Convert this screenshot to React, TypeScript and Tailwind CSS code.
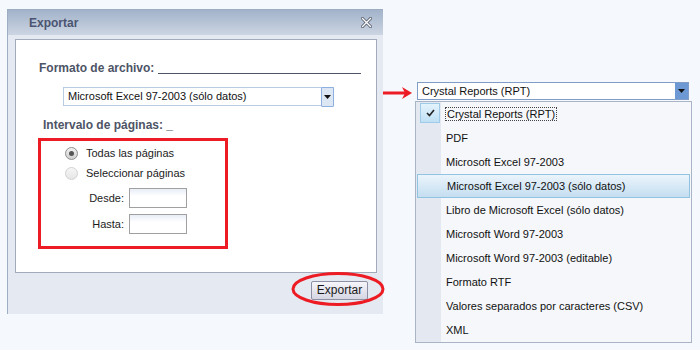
const FORMATS = [
  "Crystal Reports (RPT)",
  "PDF",
  "Microsoft Excel 97-2003",
  "Microsoft Excel 97-2003 (sólo datos)",
  "Libro de Microsoft Excel (sólo datos)",
  "Microsoft Word 97-2003",
  "Microsoft Word 97-2003 (editable)",
  "Formato RTF",
  "Valores separados por caracteres (CSV)",
  "XML",
];

function Caret() {
  return (
    <svg width="7" height="4" viewBox="0 0 7 4">
      <path d="M0 0h7L3.5 4z" fill="#111" />
    </svg>
  );
}

function Radio({ checked }: { checked?: boolean }) {
  return checked ? (
    <span className="w-[13px] h-[13px] rounded-full border border-[#8e8e8e] bg-gradient-to-b from-[#f2f2f2] to-[#cfcfcf] flex items-center justify-center">
      <span className="w-[5px] h-[5px] rounded-full bg-[#555]" />
    </span>
  ) : (
    <span className="w-[13px] h-[13px] rounded-full border border-[#d2d2d2] bg-gradient-to-b from-[#f6f6f6] to-[#e6e6e6]" />
  );
}

function PageInput() {
  return <span className="w-[58px] h-[20px] border border-[#a0a0a0] bg-gradient-to-b from-[#e8eef7] to-white to-[40%]" />;
}

export default function App() {
  return (
    <div className="relative w-[700px] h-[350px] overflow-hidden bg-[#f5f9fd] flex items-start font-['Liberation_Sans',Arial,sans-serif]">
      {/* Export dialog */}
      <div className="ml-[7px] mt-[9px] w-[376px] h-[305px] flex flex-col bg-[#e5e9f1] border-l border-t border-[#9dadc3]">
        <div className="h-[25px] shrink-0 bg-gradient-to-b from-[#a2b3ca] to-[#ccd5e2] flex items-center justify-between pl-[21px] pr-[11px]">
          <span className="text-[12px] font-bold text-[#4b5470]">Exportar</span>
          <svg width="11" height="11" viewBox="0 0 11 11">
            <path d="M1.5 1.5l8 8M9.5 1.5l-8 8" stroke="#4e5566" strokeWidth="3" strokeLinecap="square" />
            <path d="M1.5 1.5l8 8M9.5 1.5l-8 8" stroke="#fff" strokeWidth="1.4" strokeLinecap="square" />
          </svg>
        </div>

        <div className="flex-1 flex flex-col pt-[4px] pl-[7px]">
          <div className="w-[362px] h-[234px] bg-white border border-[#a3abbb] flex flex-col">
            <div className="mt-[21px] pl-[23px] flex items-end">
              <span className="text-[12px] leading-[14px] font-bold text-[#4d5466]">Formato de archivo:</span>
              <span className="ml-[4px] mb-[1px] w-[203px] h-px bg-[#4d5466]" />
            </div>

            <div className="mt-[12px] ml-[47px] w-[271px] h-[19px] border border-[#b9cbe2] flex items-start">
              <span className="flex-1 pl-[4px] text-[11px] leading-[17px] text-[#111]">Microsoft Excel 97-2003 (sólo datos)</span>
              <span className="w-[13px] h-[20px] -mt-px -mr-px border border-[#8cb0df] bg-[#dde6f3] rounded-[1px] flex items-center justify-center">
                <Caret />
              </span>
            </div>

            <div className="mt-[12px] pl-[27px] text-[12px] leading-[14px] font-bold text-[#4d5466]">Intervalo de páginas: _</div>

            <div className="mt-[6px] ml-[22px] w-[190px] h-[111px] border-[3px] border-[#ed1c24] flex flex-col pt-[2px] text-[11px] text-[#1c1c1c]">
              <div className="h-[20px] flex items-center pl-[24px] gap-[8px]">
                <Radio checked />
                <span>Todas las páginas</span>
              </div>
              <div className="h-[20px] flex items-center pl-[24px] gap-[8px]">
                <Radio />
                <span>Seleccionar páginas</span>
              </div>
              <div className="mt-[5px] flex items-center gap-[5px]">
                <span className="w-[83px] text-right">Desde:</span>
                <PageInput />
              </div>
              <div className="mt-[6px] flex items-center gap-[5px]">
                <span className="w-[83px] text-right">Hasta:</span>
                <PageInput />
              </div>
            </div>
          </div>

          <div className="mt-[8px] pr-[15px] flex justify-end">
            <button className="w-[57px] h-[19px] border border-[#8d8fa3] rounded-[2px] bg-gradient-to-b from-[#f6f5fa] to-[#d6d6e3] text-[12px] leading-[17px] text-[#1a1a1a]">
              Exportar
            </button>
          </div>
        </div>
      </div>

      {/* Format dropdown */}
      <div className="mt-[82px] flex items-start">
        <svg className="mt-[4px]" width="32" height="14" viewBox="0 0 32 14">
          <path d="M0 7h22" stroke="#ed1c24" strokeWidth="3" />
          <path d="M19 1l10 6-10 6 3-6z" fill="#ed1c24" />
        </svg>
        <div className="w-[277px] flex flex-col">
          <div className="ml-[2px] w-[272px] h-[18px] border border-[#7f9dc6] bg-white flex items-stretch">
            <span className="flex-1 pl-[4px] text-[11px] leading-[16px] text-[#111]">Crystal Reports (RPT)</span>
            <span className="w-[13px] bg-[#6c98d4] flex items-center justify-center">
              <Caret />
            </span>
          </div>
          <div className="mt-px w-[277px] border border-[#a9b5c6] bg-[linear-gradient(to_right,#e4e8f0_25px,#f5f7fa_25px)] text-[11px] text-[#111]">
            {FORMATS.map((f, i) =>
              i === 0 ? (
                <div key={f} className="relative h-[24px] flex items-center pl-[29px]">
                  <span className="absolute left-[4px] top-[1px] w-[20px] h-[20px] border border-[#9fcbe9] bg-gradient-to-b from-[#e4f3fc] to-[#bfe0f5] flex items-center justify-center">
                    <svg width="9" height="8" viewBox="0 0 9 8">
                      <path d="M1 4l2.5 2.5L8 1" stroke="#222" strokeWidth="1.6" fill="none" />
                    </svg>
                  </span>
                  <span className="border border-dotted border-[#444] px-px leading-[12px]">{f}</span>
                </div>
              ) : i === 3 ? (
                <div key={f} className="mx-px h-[24px] flex items-center pl-[29px] border border-[#90c4e2] bg-gradient-to-b from-[#ebf4fb] to-[#c4def0]">
                  {f}
                </div>
              ) : (
                <div key={f} className="h-[24px] flex items-center pl-[30px]">
                  {f}
                </div>
              )
            )}
          </div>
        </div>
      </div>

      {/* Annotation around the export button */}
      <svg className="absolute left-[290px] top-[270px]" width="97" height="38" viewBox="0 0 97 38">
        <ellipse cx="48" cy="19" rx="45" ry="15.5" stroke="#ed1c24" strokeWidth="3" fill="none" />
      </svg>
    </div>
  );
}
